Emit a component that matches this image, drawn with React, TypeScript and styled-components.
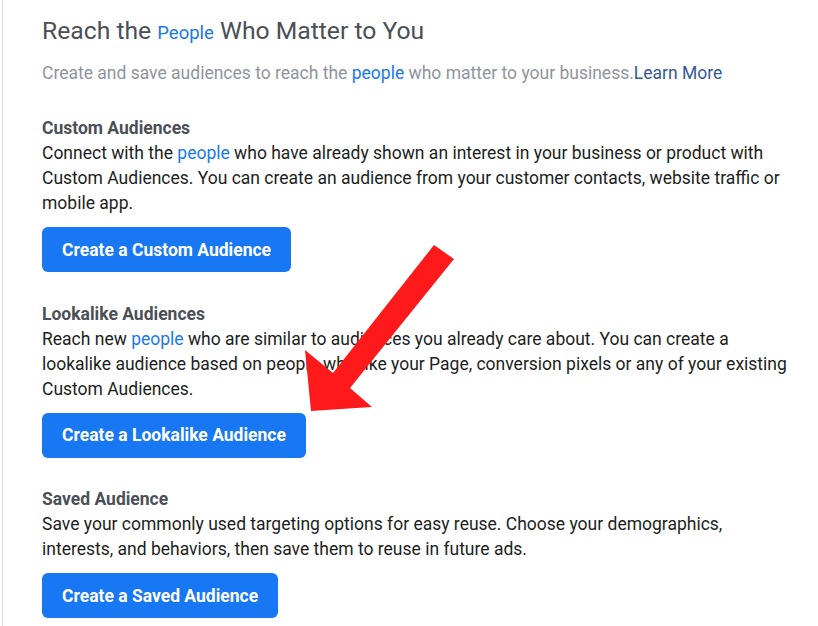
import React from "react";
import styled, { createGlobalStyle } from "styled-components";

const GlobalStyle = createGlobalStyle`
  html, body {
    margin: 0;
    padding: 0;
    background: #ffffff;
  }
  body {
    font-family: Roboto, "Liberation Sans", Arial, sans-serif;
    -webkit-font-smoothing: antialiased;
  }
`;

const Page = styled.div`
  position: relative;
  margin-left: 2px;
  border-left: 1px solid #dadde1;
  min-height: 626px;
  padding: 16px 22px 0 39px;
  box-sizing: border-box;
`;

const Title = styled.h1`
  margin: 0;
  font-size: 24.7px;
  line-height: 30px;
  font-weight: 400;
  color: #4b4f56;
`;

const TitleLink = styled.span`
  font-size: 18.5px;
  color: #1877f2;
`;

const Subtitle = styled.p`
  margin: 12px 0 0;
  font-size: 17.5px;
  line-height: 26px;
  color: #90949c;
`;

const Link = styled.a<{ $dark?: boolean }>`
  color: ${({ $dark }) => ($dark ? "#365899" : "#1877f2")};
  text-decoration: none;
  cursor: pointer;
`;

const Sections = styled.div`
  display: flex;
  flex-direction: column;
  gap: 29.5px;
  margin-top: 30px;
`;

const Section = styled.section`
  display: flex;
  flex-direction: column;
  align-items: flex-start;
`;

const Heading = styled.h2`
  margin: 0;
  font-size: 17.5px;
  line-height: 25px;
  font-weight: 700;
  color: #4b4f56;
`;

const Body = styled.p`
  margin: 0;
  font-size: 17.5px;
  line-height: 25px;
  color: #1c1e21;
`;

const Button = styled.button`
  margin-top: 11px;
  height: 45px;
  padding: 0 20px;
  border: none;
  border-radius: 6px;
  background: #1877f2;
  color: #ffffff;
  font-family: inherit;
  font-size: 17.5px;
  font-weight: 700;
  cursor: pointer;
`;

const Arrow = styled.svg`
  position: absolute;
  left: 0;
  top: 0;
  pointer-events: none;
`;

const sections = [
  {
    title: "Custom Audiences",
    before: "Connect with the ",
    after:
      " who have already shown an interest in your business or product with Custom Audiences. You can create an audience from your customer contacts, website traffic or mobile app.",
    button: "Create a Custom Audience",
  },
  {
    title: "Lookalike Audiences",
    before: "Reach new ",
    after:
      " who are similar to audiences you already care about. You can create a lookalike audience based on people who like your Page, conversion pixels or any of your existing Custom Audiences.",
    button: "Create a Lookalike Audience",
  },
  {
    title: "Saved Audience",
    before:
      "Save your commonly used targeting options for easy reuse. Choose your demographics, interests, and behaviors, then save them to reuse in future ads.",
    after: "",
    button: "Create a Saved Audience",
  },
];

export default function App() {
  return (
    <>
      <GlobalStyle />
      <Page>
        <Title>
          Reach the <TitleLink>People</TitleLink> Who Matter to You
        </Title>
        <Subtitle>
          Create and save audiences to reach the <Link>people</Link> who matter to your
          business.<Link $dark>Learn More</Link>
        </Subtitle>
        <Sections>
          {sections.map((s) => (
            <Section key={s.title}>
              <Heading>{s.title}</Heading>
              <Body>
                {s.before}
                {s.after && <Link>people</Link>}
                {s.after}
              </Body>
              <Button>{s.button}</Button>
            </Section>
          ))}
        </Sections>
        <Arrow width="818" height="626" viewBox="0 0 818 626">
          <polygon
            points="434,245 454,259 350,388 372,407 311,411 305,350 333,373"
            fill="#fe1a1a"
            transform="translate(-3 0)"
          />
        </Arrow>
      </Page>
    </>
  );
}
